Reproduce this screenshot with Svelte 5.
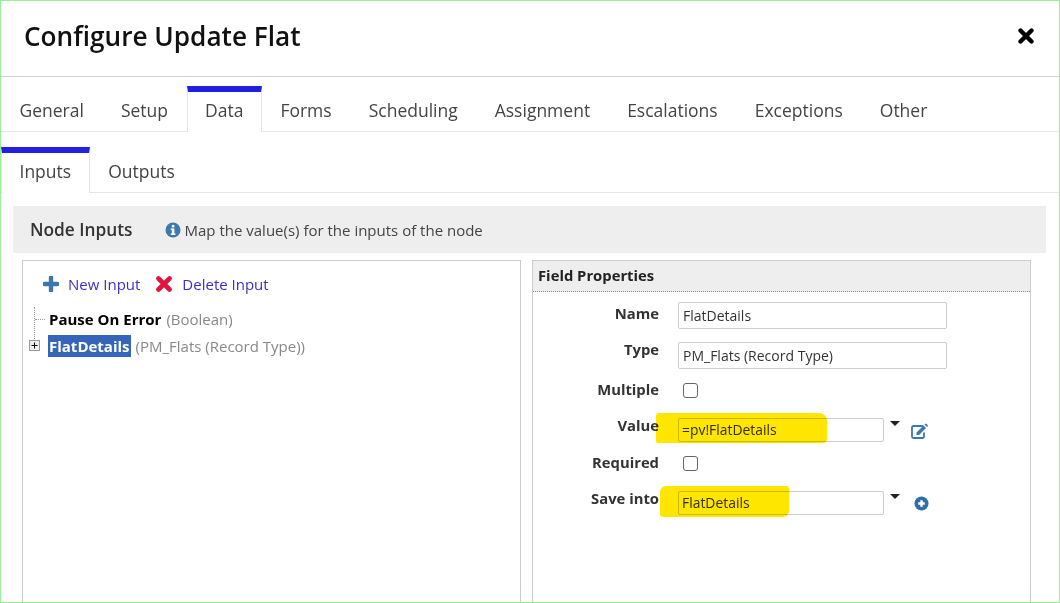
<script>
  const tabs = ['General', 'Setup', 'Data', 'Forms', 'Scheduling', 'Assignment', 'Escalations', 'Exceptions', 'Other'];
  const subTabs = ['Inputs', 'Outputs'];
</script>

<div class="dialog">
  <header class="title-bar">
    <h1>Configure Update Flat</h1>
    <svg class="close" viewBox="0 0 16 16" width="16" height="16" aria-hidden="true">
      <path d="M2.5 2.5 L13.5 13.5 M13.5 2.5 L2.5 13.5" stroke="#000" stroke-width="4.4" stroke-linecap="round" />
    </svg>
  </header>

  <nav class="tabs main-tabs">
    {#each tabs as tab}
      <span class="tab" class:active={tab === 'Data'}>{tab}</span>
    {/each}
  </nav>

  <nav class="tabs sub-tabs">
    {#each subTabs as tab}
      <span class="tab" class:active={tab === 'Inputs'}>{tab}</span>
    {/each}
  </nav>

  <section class="panel">
    <div class="panel-head">
      <h2>Node Inputs</h2>
      <svg class="info" viewBox="0 0 16 16" width="16" height="16" aria-hidden="true">
        <circle cx="8" cy="8" r="7.5" fill="#3a78ad" />
        <rect x="6.8" y="3" width="2.6" height="2.4" fill="#fff" />
        <path d="M5.8 6.6h3.6v5h1.1v1.5H5.8v-1.5h1v-3.500h-1z" fill="#fff" />
      </svg>
      <span class="hint">Map the value(s) for the inputs of the node</span>
    </div>

    <div class="columns">
      <div class="box tree-box">
        <div class="toolbar">
          <svg viewBox="0 0 16 16" width="16" height="16" aria-hidden="true">
            <path d="M8 1.500v13M1.500 8h13" stroke="#3a78ad" stroke-width="4.400" stroke-linecap="round" />
          </svg>
          <span class="action">New Input</span>
          <svg class="delete" viewBox="0 0 16 16" width="16" height="16" aria-hidden="true">
            <path d="M2.500 2.500l11 11M13.500 2.500l-11 11" stroke="#e2143c" stroke-width="4.600" stroke-linecap="round" />
          </svg>
          <span class="action">Delete Input</span>
        </div>

        <ul class="tree">
          <li class="leaf">
            <b>Pause On Error</b> <span class="kind">(Boolean)</span>
          </li>
          <li class="branch">
            <span class="expander">
              <svg viewBox="0 0 11 11" width="11" height="11" aria-hidden="true">
                <rect x="0.500" y="0.500" width="10" height="10" fill="#eee" stroke="#999" />
                <path d="M2.500 5.500h6M5.500 2.500v6" stroke="#000" />
              </svg>
            </span>
            <b class="selected">FlatDetails</b> <span class="kind">(PM_Flats (Record Type))</span>
          </li>
        </ul>
      </div>

      <div class="box props">
        <div class="props-head">Field Properties</div>
        <div class="form">
          <div class="row row-name">
            <span class="label">Name</span>
            <span class="input wide">FlatDetails</span>
          </div>
          <div class="row row-type">
            <span class="label">Type</span>
            <span class="input wide">PM_Flats (Record Type)</span>
          </div>
          <div class="row row-multiple">
            <span class="label">Multiple</span>
            <span class="check"></span>
          </div>
          <div class="row row-value">
            <span class="label">Value</span>
            <span class="input narrow">=pv!FlatDetails</span>
            <span class="caret"></span>
            <svg class="edit" viewBox="0 0 18 16" width="18" height="16" aria-hidden="true">
              <path d="M13 3H3.500A1.500 1.500 0 0 0 2 4.500v9A1.500 1.500 0 0 0 3.500 15h9a1.500 1.500 0 0 0 1.500-1.500V9.500" fill="none" stroke="#3a78ad" stroke-width="1.800" />
              <path d="M6.500 9.500L13.500 2.500l2.500 2.500-7 7H6.500zM14.500 1.500l.8-.8h1l1.500 1.500v1l-.8.8z" fill="#3a78ad" />
            </svg>
            <span class="marker marker-value"></span>
          </div>
          <div class="row row-required">
            <span class="label">Required</span>
            <span class="check"></span>
          </div>
          <div class="row row-save">
            <span class="label">Save into</span>
            <span class="input narrow">FlatDetails</span>
            <span class="caret"></span>
            <svg class="add" viewBox="0 0 16 16" width="15" height="15" aria-hidden="true">
              <circle cx="8" cy="8" r="7.500" fill="#2f6fa8" />
              <path d="M8 4.500v7M4.500 8h7" stroke="#fff" stroke-width="2.600" />
            </svg>
            <span class="marker marker-save"></span>
          </div>
        </div>
      </div>
    </div>
  </section>
</div>

<style>
  :global(body) {
    margin: 0;
    background: #fff;
  }

  .dialog {
    box-sizing: border-box;
    width: 1060px;
    height: 603px;
    border: 1px solid #97f097;
    overflow: hidden;
    font-family: "Open Sans", "Noto Sans", sans-serif;
    font-size: 14px;
    color: #333;
    background: #fff;
  }

  .title-bar {
    display: flex;
    align-items: center;
    justify-content: space-between;
    box-sizing: border-box;
    height: 76px;
    padding: 0 25px 6px 23px;
    border-bottom: 1px solid #d2d2d2;
  }

  h1 {
    margin: 0;
    font-size: 26.2px;
    font-weight: 600;
    color: #111;
  }

  .tabs {
    display: flex;
    box-sizing: border-box;
    border-bottom: 1px solid #e6e6e6;
  }

  .main-tabs {
    height: 55px;
    padding-top: 9px;
  }

  .sub-tabs {
    height: 61px;
    padding-top: 15px;
  }

  .tab {
    box-sizing: border-box;
    height: calc(100% + 1px);
    padding: 4px 17.500px 0;
    border-top: 6px solid transparent;
    border-right: 1px solid transparent;
    border-left: 1px solid transparent;
    font-size: 17.500px;
    line-height: 28px;
    color: #444;
    white-space: nowrap;
  }

  .tab.active {
    border-top-color: #2020e0;
    border-right-color: #e6e6e6;
    border-left-color: #e6e6e6;
    background: #fff;
  }

  .panel {
    margin: 13px 13px 0 12px;
  }

  .panel-head {
    display: flex;
    align-items: center;
    height: 47px;
    padding-left: 17px;
    background: #eee;
  }

  h2 {
    margin: 0 32px 0 0;
    font-size: 17.300px;
    font-weight: 600;
    color: #333;
  }

  .hint {
    margin-left: 4px;
    font-size: 15px;
    color: #444;
  }

  .columns {
    display: flex;
    gap: 11px;
    margin: 7px 15px 0 9px;
  }

  .box {
    box-sizing: border-box;
    width: 499px;
    height: 400px;
    border: 1px solid #ccc;
  }

  .toolbar {
    display: flex;
    align-items: center;
    height: 24px;
    margin-top: 11px;
    padding-left: 20px;
  }

  .action {
    margin-left: 9px;
    font-size: 15px;
    color: #3b30c4;
  }

  .delete {
    margin-left: 16px;
  }

  .delete + .action {
    margin-left: 10px;
  }

  .tree {
    list-style: none;
    margin: 9px 0 0;
    padding: 0;
    font-size: 15px;
    color: #000;
  }

  .tree li {
    display: flex;
    align-items: center;
    gap: 5px;
    position: relative;
    height: 27px;
    padding-left: 26px;
    white-space: nowrap;
  }

  .leaf::before {
    content: '';
    position: absolute;
    top: 2px;
    left: 11px;
    width: 1px;
    height: 34px;
    border-left: 1px dotted #999;
  }

  .leaf::after {
    content: '';
    position: absolute;
    top: 14px;
    left: 12px;
    width: 10px;
    border-top: 1px dotted #999;
  }

  .tree b {
    font-weight: 700;
  }

  .kind {
    color: #888;
  }

  .expander {
    display: flex;
    position: absolute;
    left: 6px;
    top: 8px;
  }

  .selected {
    margin-left: -1px;
    padding: 0 1px;
    line-height: 22px;
    background: #3565b8;
    color: #fff;
  }

  .props-head {
    box-sizing: border-box;
    height: 31px;
    padding-left: 5px;
    border-bottom: 1px dotted #888;
    background: #eee;
    font-size: 14.800px;
    line-height: 29px;
    font-weight: 700;
    color: #222;
  }

  .form {
    position: relative;
    padding-top: 10px;
  }

  .row {
    display: flex;
    align-items: center;
    position: relative;
  }

  .row-name { height: 27px; }
  .row-type { height: 27px; margin-top: 13px; }
  .row-multiple { height: 20px; margin-top: 11px; }
  .row-value { height: 24px; margin-top: 18px; }
  .row-required { height: 20px; margin-top: 11px; }
  .row-save { height: 24px; margin-top: 18px; }

  .label {
    width: 126px;
    margin-right: 1px;
    font-size: 14.800px;
    font-weight: 700;
    color: #333;
    text-align: right;
  }

  .row-name .label { margin-top: -6px; }
  .row-type .label { margin-top: -13px; }
  .row-multiple .label { margin-top: -2px; }
  .row-value .label { margin-top: -10px; }
  .row-required .label { margin-top: -2px; }
  .row-save .label { margin-top: -10px; }

  .input {
    box-sizing: border-box;
    height: 100%;
    margin-left: 18px;
    padding-left: 4px;
    border: 1px solid #ccc;
    border-radius: 2px;
    font-size: 14px;
    line-height: 25px;
    color: #333;
  }

  .wide { width: 269px; }
  .narrow { width: 206px; padding-left: 3px; font-size: 13.900px; line-height: 22px; }

  .check {
    box-sizing: border-box;
    width: 15px;
    height: 15px;
    margin-left: 23px;
    border: 1px solid #666;
    border-radius: 3px;
  }

  .caret {
    align-self: flex-start;
    width: 0;
    height: 0;
    margin: 3px 0 0 6px;
    border-top: 5px solid #222;
    border-right: 5px solid transparent;
    border-left: 5px solid transparent;
  }

  .edit {
    margin: 1px 0 0 10px;
  }

  .add {
    margin: 1px 0 0 14px;
  }

  .marker {
    position: absolute;
    background: #ffe600;
    mix-blend-mode: multiply;
    pointer-events: none;
  }

  .marker-value {
    left: 123px;
    top: -5px;
    width: 171px;
    height: 30px;
    border-radius: 3px 8px 4px 2px;
  }

  .marker-save {
    left: 127px;
    top: -5px;
    width: 129px;
    height: 31px;
    border-radius: 6px 3px 6px 3px;
  }
</style>
